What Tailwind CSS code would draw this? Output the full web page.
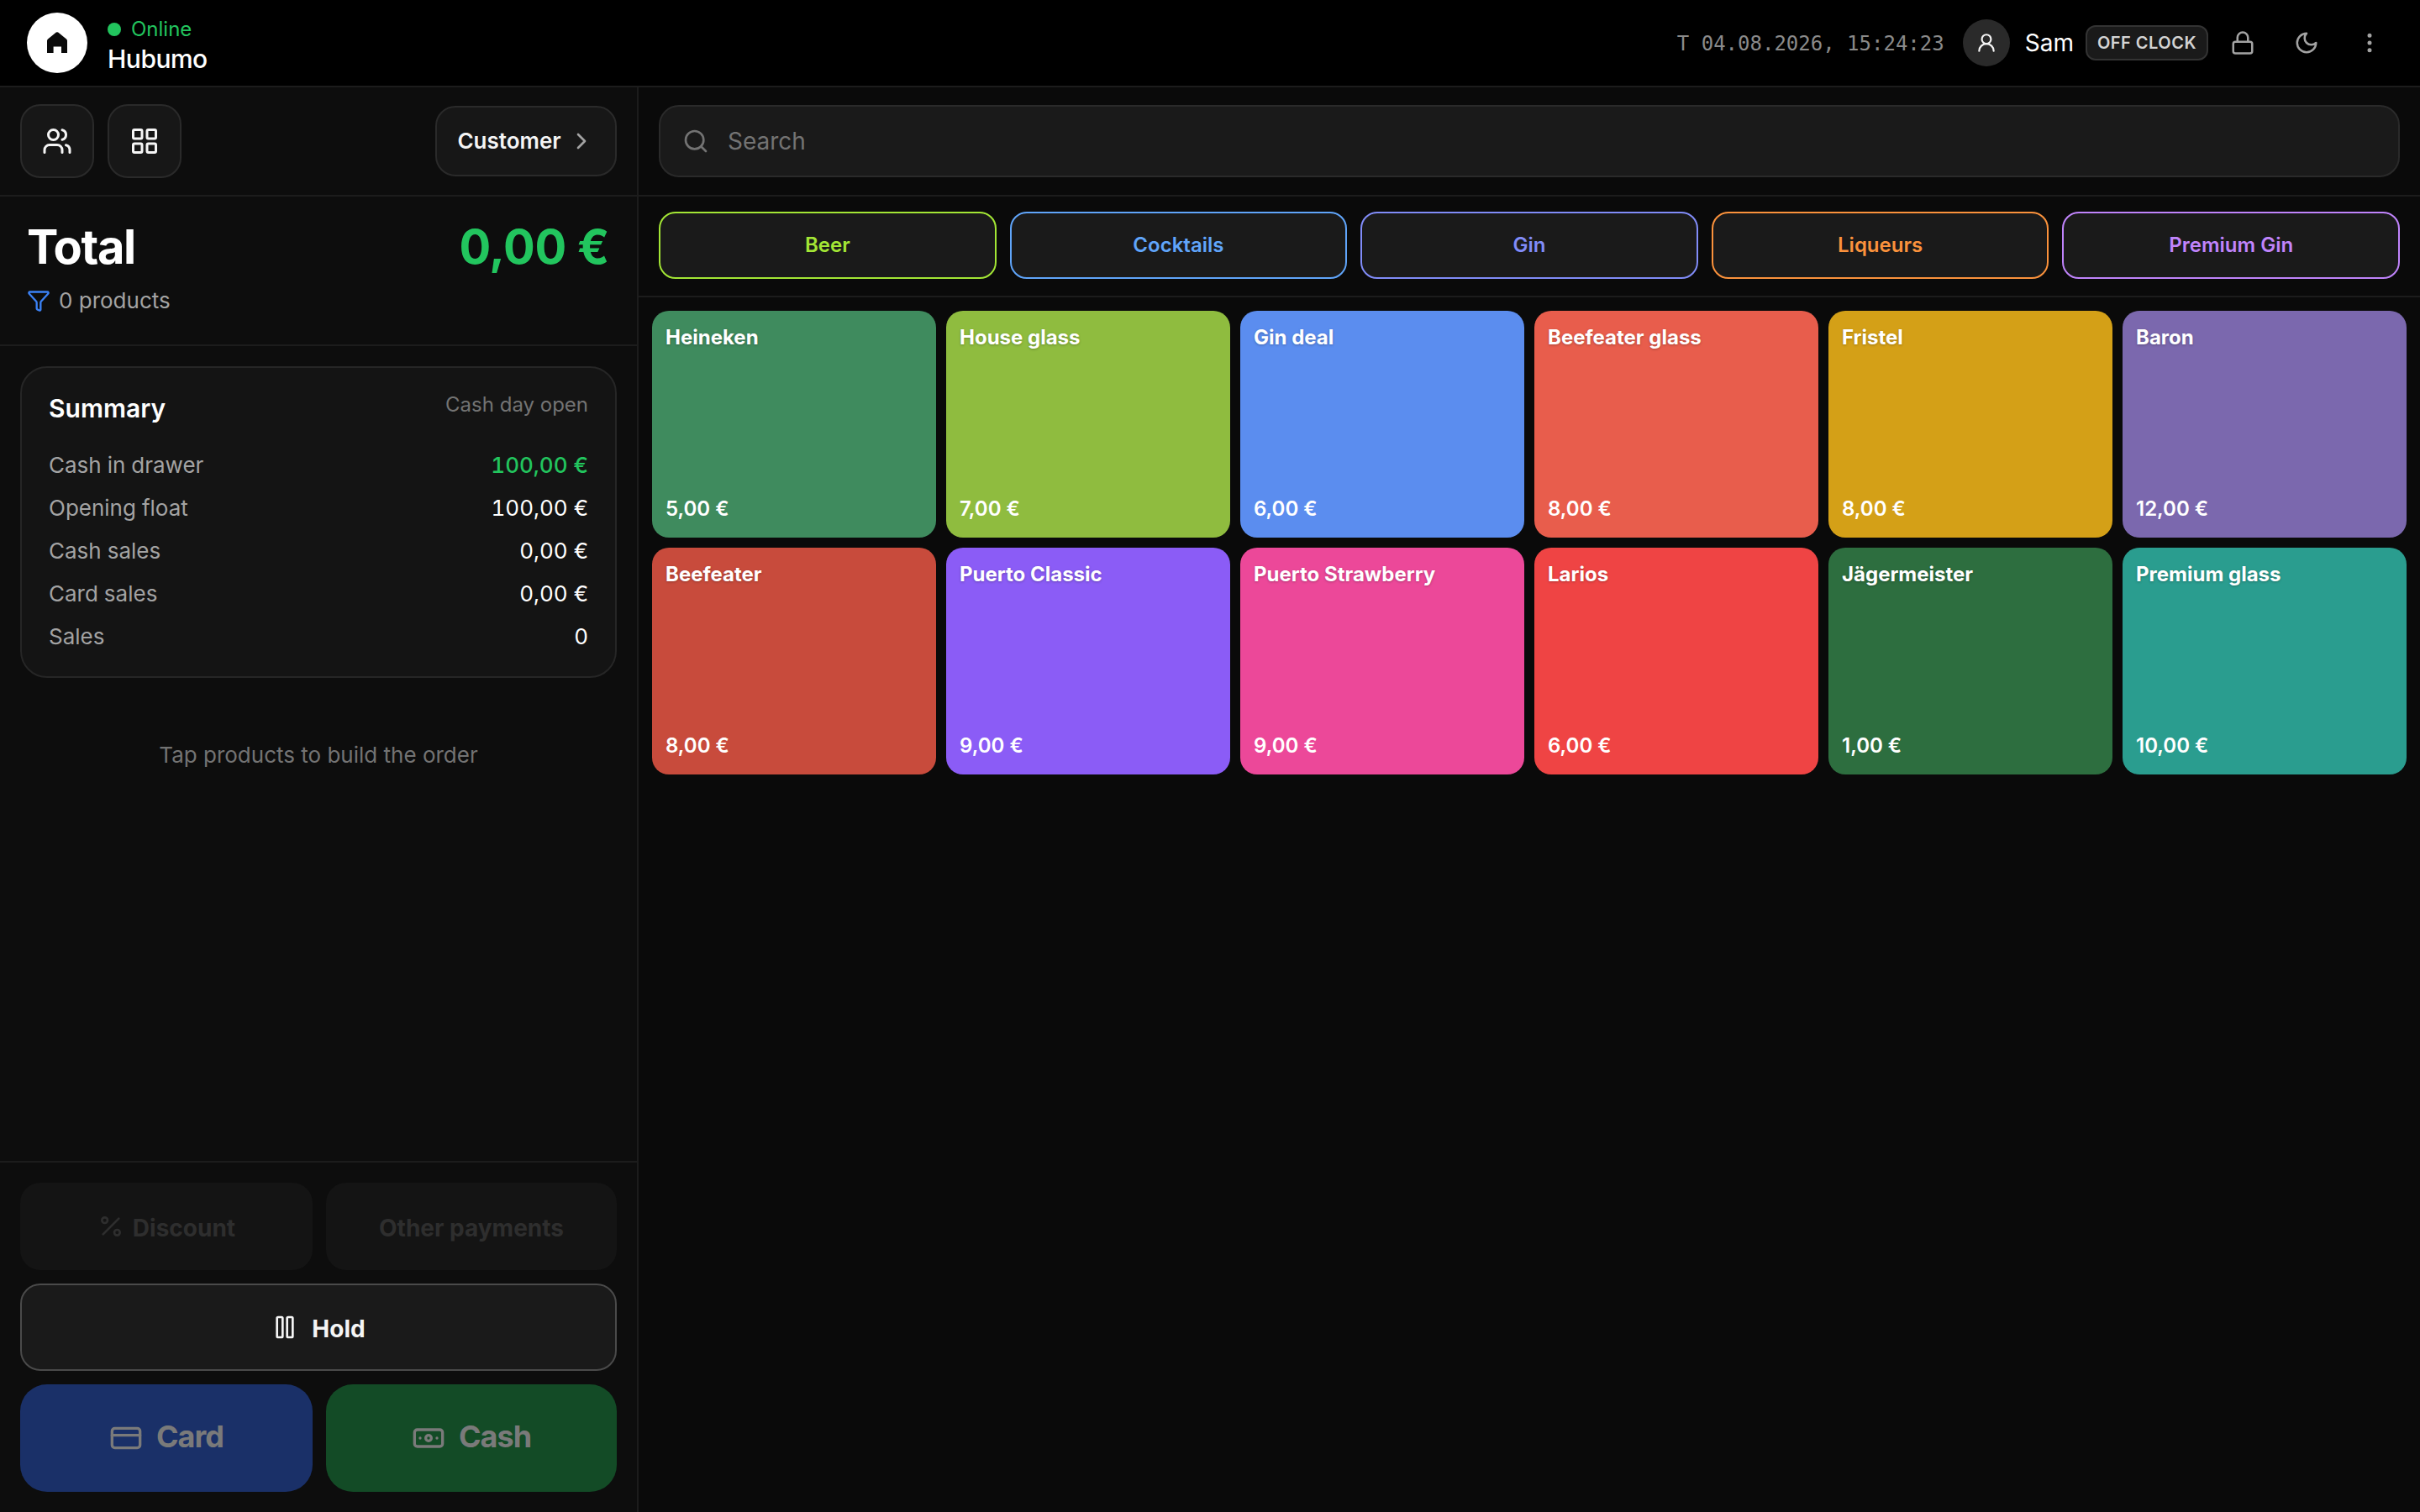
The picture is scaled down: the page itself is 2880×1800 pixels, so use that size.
<!DOCTYPE html>
<html lang="en">
<head>
    <meta charset="UTF-8">
    <meta name="viewport" content="width=device-width, initial-scale=1.0">
    <title>Hubumo POS</title>
    <script src="https://cdn.jsdelivr.net/npm/@tailwindcss/browser@4"></script>
</head>
<body class="bg-[#0a0a0a] text-white font-[family-name:Inter,sans-serif] w-[2880px] h-[1800px] overflow-hidden flex flex-col">

    <!-- Top bar -->
    <header class="h-[104px] shrink-0 bg-black border-b-2 border-[#1c1c1c] flex items-center pl-[32px] pr-[44px]">
        <div class="w-[72px] h-[72px] rounded-full bg-white flex items-center justify-center">
            <svg class="w-[24px] h-[26px]" viewBox="0 0 24 26" fill="#0a0a0a"><path d="M10.8.6a2 2 0 0 1 2.4 0L23 8.5a2.5 2.5 0 0 1 1 2V25h-7v-7.5H7.6V25H0V10.5a2.5 2.5 0 0 1 1-2z"/></svg>
        </div>
        <div class="ml-[24px] mt-[6px] flex flex-col">
            <div class="flex items-center gap-[12px] text-[24px] leading-[32px] text-[#22c55e]">
                <span class="w-[16px] h-[16px] rounded-full bg-[#22c55e]"></span>
                <span>Online</span>
            </div>
            <div class="text-[30px] leading-[38px] font-medium tracking-[-0.5px]">Hubumo</div>
        </div>
        <div class="ml-auto flex items-center">
            <span class="mt-[2px] font-[family-name:'DejaVu_Sans_Mono',monospace] text-[24px] text-[#8a8a8a]">T 04.08.2026, 15:24:23</span>
            <div class="ml-[22px] w-[56px] h-[56px] rounded-full bg-[#2a2a2a] flex items-center justify-center">
                <svg class="w-[26px] h-[26px]" viewBox="0 0 24 24" fill="none" stroke="#f5f5f5" stroke-width="2" stroke-linecap="round" stroke-linejoin="round"><circle cx="12" cy="8" r="5"/><path d="M20 21a8 8 0 0 0-16 0"/></svg>
            </div>
            <span class="ml-[18px] text-[28px]">Sam</span>
            <span class="ml-[14px] h-[42px] px-[12px] rounded-[12px] bg-[#1a1a1a] border-2 border-[#333333] flex items-center text-[20px] font-semibold tracking-[0.5px] text-[#d4d4d4]">OFF CLOCK</span>
            <svg class="ml-[26px] w-[30px] h-[30px]" viewBox="0 0 24 24" fill="none" stroke="#a3a3a3" stroke-width="2" stroke-linecap="round" stroke-linejoin="round"><rect x="3" y="11" width="18" height="11" rx="2"/><path d="M7 11V7a5 5 0 0 1 10 0v4"/></svg>
            <svg class="ml-[46px] w-[30px] h-[30px]" viewBox="0 0 24 24" fill="none" stroke="#a3a3a3" stroke-width="2" stroke-linecap="round" stroke-linejoin="round"><path d="M12 3a6 6 0 0 0 9 9 9 9 0 1 1-9-9Z"/></svg>
            <svg class="ml-[45px] mr-[1px] w-[30px] h-[30px]" viewBox="0 0 24 24" fill="none" stroke="#a3a3a3" stroke-width="2" stroke-linecap="round" stroke-linejoin="round"><circle cx="12" cy="12" r="1"/><circle cx="12" cy="5" r="1"/><circle cx="12" cy="19" r="1"/></svg>
        </div>
    </header>

    <div class="flex-1 flex min-h-0">
        <!-- Order panel -->
        <aside class="w-[760px] shrink-0 border-r-2 border-[#1c1c1c] bg-[#0d0d0d] flex flex-col">
            <div class="h-[130px] shrink-0 border-b-2 border-[#1c1c1c] px-[24px] flex items-center">
                <button class="w-[88px] h-[88px] rounded-[24px] bg-[#171717] border-2 border-[#2a2a2a] flex items-center justify-center">
                    <svg class="w-[36px] h-[36px]" viewBox="0 0 24 24" fill="none" stroke="#f5f5f5" stroke-width="2" stroke-linecap="round" stroke-linejoin="round"><path d="M16 21v-2a4 4 0 0 0-4-4H6a4 4 0 0 0-4 4v2"/><circle cx="9" cy="7" r="4"/><path d="M22 21v-2a4 4 0 0 0-3-3.87"/><path d="M16 3.13a4 4 0 0 1 0 7.75"/></svg>
                </button>
                <button class="ml-[16px] w-[88px] h-[88px] rounded-[24px] bg-[#171717] border-2 border-[#2a2a2a] flex items-center justify-center">
                    <svg class="w-[36px] h-[36px]" viewBox="0 0 24 24" fill="none" stroke="#f5f5f5" stroke-width="2" stroke-linecap="round" stroke-linejoin="round"><rect x="3" y="3" width="7" height="7" rx="1"/><rect x="14" y="3" width="7" height="7" rx="1"/><rect x="14" y="14" width="7" height="7" rx="1"/><rect x="3" y="14" width="7" height="7" rx="1"/></svg>
                </button>
                <button class="ml-auto w-[216px] h-[84px] rounded-[24px] bg-[#171717] border-2 border-[#2a2a2a] flex items-center justify-center gap-[8px] text-[26px] font-semibold text-[#f5f5f5]">
                    <span class="-mt-[2px]">Customer</span>
                    <svg class="w-[32px] h-[32px]" viewBox="0 0 24 24" fill="none" stroke="#a3a3a3" stroke-width="2" stroke-linecap="round" stroke-linejoin="round"><path d="m9 18 6-6-6-6"/></svg>
                </button>
            </div>

            <div class="h-[178px] shrink-0 border-b-2 border-[#1c1c1c] pl-[32px] pr-[33px] pt-[24px]">
                <div class="flex justify-between items-center text-[56px] leading-[72px] font-bold">
                    <span class="tracking-tight">Total</span>
                    <span class="text-[#22c55e] tracking-[-0.3px]">0,00 €</span>
                </div>
                <div class="mt-[8px] flex items-center gap-[10px] text-[26px] text-[#a3a3a3]">
                    <svg class="w-[28px] h-[28px]" viewBox="0 0 24 24" fill="none" stroke="#3b82f6" stroke-width="2" stroke-linecap="round" stroke-linejoin="round"><path d="M10 20a1 1 0 0 0 .553.895l2 1A1 1 0 0 0 14 21v-7a2 2 0 0 1 .517-1.341L21.74 4.67A1 1 0 0 0 21 3H3a1 1 0 0 0-.742 1.67l7.225 7.989A2 2 0 0 1 10 14z"/></svg>
                    <span>0 products</span>
                </div>
            </div>

            <div class="flex-1 px-[24px] pt-[24px]">
                <section class="rounded-[32px] bg-[#141414] border-2 border-[#262626] h-[371px] px-[32px] pt-[22px]">
                    <div class="flex justify-between items-start">
                        <span class="text-[30px] leading-[52px] font-semibold">Summary</span>
                        <span class="text-[24px] leading-[44px] text-[#737373]">Cash day open</span>
                    </div>
                    <div class="mt-[22px] flex flex-col gap-[11px] text-[26px] leading-[40px] tabular-nums">
                        <div class="flex justify-between"><span class="text-[#a3a3a3]">Cash in drawer</span><span class="text-[#22c55e] font-medium">100,00 €</span></div>
                        <div class="flex justify-between"><span class="text-[#a3a3a3]">Opening float</span><span>100,00 €</span></div>
                        <div class="flex justify-between"><span class="text-[#a3a3a3]">Cash sales</span><span>0,00 €</span></div>
                        <div class="flex justify-between"><span class="text-[#a3a3a3]">Card sales</span><span>0,00 €</span></div>
                        <div class="flex justify-between"><span class="text-[#a3a3a3]">Sales</span><span>0</span></div>
                    </div>
                </section>
                <p class="mt-[72px] text-center text-[26px] leading-[40px] text-[#737373]">Tap products to build the order</p>
            </div>

            <div class="shrink-0 border-t-2 border-[#1c1c1c] px-[24px] pt-[24px] pb-[24px] flex flex-col gap-[16px]">
                <div class="grid grid-cols-[348px_346px] gap-[16px]">
                    <button class="h-[104px] rounded-[24px] bg-[#141414] flex items-center justify-center gap-[10px] text-[28px] font-bold text-[#2e2e2e]">
                        <svg class="w-[32px] h-[32px]" viewBox="0 0 24 24" fill="none" stroke="#2e2e2e" stroke-width="2" stroke-linecap="round" stroke-linejoin="round"><line x1="19" y1="5" x2="5" y2="19"/><circle cx="6.5" cy="6.5" r="2.5"/><circle cx="17.5" cy="17.5" r="2.5"/></svg>
                        <span class="mt-[3px]">Discount</span>
                    </button>
                    <button class="h-[104px] rounded-[24px] bg-[#141414] flex items-center justify-center text-[28px] font-bold text-[#2e2e2e]"><span class="mt-[3px]">Other payments</span></button>
                </div>
                <button class="h-[104px] rounded-[24px] bg-[#1a1a1a] border-2 border-[#4a4a4a] flex items-center justify-center gap-[16px] text-[28px] font-bold text-[#f5f5f5]">
                    <svg class="w-[32px] h-[32px]" viewBox="0 0 24 24" fill="none" stroke="#f5f5f5" stroke-width="2" stroke-linecap="round" stroke-linejoin="round"><rect x="14" y="3" width="5" height="18" rx="1"/><rect x="5" y="3" width="5" height="18" rx="1"/></svg>
                    <span class="mt-[3px]">Hold</span>
                </button>
                <div class="grid grid-cols-[348px_346px] gap-[16px]">
                    <button class="h-[128px] rounded-[32px] bg-[#1a3068] flex items-center justify-center gap-[16px] text-[36px] font-bold tracking-[-1px] text-[#7a7a7a]">
                        <svg class="w-[40px] h-[40px]" viewBox="0 0 24 24" fill="none" stroke="#7a7a7a" stroke-width="2" stroke-linecap="round" stroke-linejoin="round"><rect x="2" y="5" width="20" height="14" rx="2"/><line x1="2" y1="10" x2="22" y2="10"/></svg>
                        <span class="-mt-[4px]">Card</span>
                    </button>
                    <button class="h-[128px] rounded-[32px] bg-[#134b26] flex items-center justify-center gap-[16px] text-[36px] font-bold tracking-[-1px] text-[#7a7a7a]">
                        <svg class="w-[40px] h-[40px]" viewBox="0 0 24 24" fill="none" stroke="#7a7a7a" stroke-width="2" stroke-linecap="round" stroke-linejoin="round"><rect x="2" y="6" width="20" height="12" rx="2"/><circle cx="12" cy="12" r="2"/><path d="M6 12h.01M18 12h.01"/></svg>
                        <span class="-mt-[4px]">Cash</span>
                    </button>
                </div>
            </div>
        </aside>

        <!-- Products -->
        <main class="flex-1 min-w-0 flex flex-col">
            <div class="h-[130px] shrink-0 border-b-2 border-[#1c1c1c] px-[24px] flex items-center">
                <div class="w-full h-[86px] rounded-[24px] bg-[#1a1a1a] border-2 border-[#2a2a2a] flex items-center px-[26px] gap-[22px]">
                    <svg class="w-[32px] h-[32px]" viewBox="0 0 24 24" fill="none" stroke="#737373" stroke-width="2" stroke-linecap="round" stroke-linejoin="round"><path d="m21 21-4.34-4.34"/><circle cx="11" cy="11" r="8"/></svg>
                    <span class="text-[28px] text-[#737373]">Search</span>
                </div>
            </div>
            <div class="h-[120px] shrink-0 border-b-2 border-[#1c1c1c] px-[24px] pt-[18px] grid grid-cols-5 gap-[16px] items-start">
                <button class="h-[80px] rounded-[20px] bg-[#1a1a1a] border-2 border-[#a3e635] text-[24px] font-semibold text-[#a3e635]">Beer</button>
                <button class="h-[80px] rounded-[20px] bg-[#1a1a1a] border-2 border-[#60a5fa] text-[24px] font-semibold text-[#60a5fa]">Cocktails</button>
                <button class="h-[80px] rounded-[20px] bg-[#1a1a1a] border-2 border-[#818cf8] text-[24px] font-semibold text-[#818cf8]">Gin</button>
                <button class="h-[80px] rounded-[20px] bg-[#1a1a1a] border-2 border-[#fb923c] text-[24px] font-semibold text-[#fb923c]">Liqueurs</button>
                <button class="h-[80px] rounded-[20px] bg-[#1a1a1a] border-2 border-[#c084fc] text-[24px] font-semibold text-[#c084fc]">Premium Gin</button>
            </div>
            <div class="p-[16px] grid grid-cols-6 grid-rows-[270px_270px] gap-[12px]">
                <div class="rounded-[20px] px-[16px] pt-[16px] pb-[18px] flex flex-col justify-between bg-[#3f8b5e]"><span class="text-[24px] leading-[32px] font-bold [text-shadow:0_1px_3px_rgba(0,0,0,0.25)]">Heineken</span><span class="text-[24px] leading-[32px] font-semibold">5,00 €</span></div>
                <div class="rounded-[20px] px-[16px] pt-[16px] pb-[18px] flex flex-col justify-between bg-[#8fbc3f]"><span class="text-[24px] leading-[32px] font-bold [text-shadow:0_1px_3px_rgba(0,0,0,0.25)]">House glass</span><span class="text-[24px] leading-[32px] font-semibold">7,00 €</span></div>
                <div class="rounded-[20px] px-[16px] pt-[16px] pb-[18px] flex flex-col justify-between bg-[#5b8def]"><span class="text-[24px] leading-[32px] font-bold [text-shadow:0_1px_3px_rgba(0,0,0,0.25)]">Gin deal</span><span class="text-[24px] leading-[32px] font-semibold">6,00 €</span></div>
                <div class="rounded-[20px] px-[16px] pt-[16px] pb-[18px] flex flex-col justify-between bg-[#e85d4c]"><span class="text-[24px] leading-[32px] font-bold [text-shadow:0_1px_3px_rgba(0,0,0,0.25)]">Beefeater glass</span><span class="text-[24px] leading-[32px] font-semibold">8,00 €</span></div>
                <div class="rounded-[20px] px-[16px] pt-[16px] pb-[18px] flex flex-col justify-between bg-[#d4a017]"><span class="text-[24px] leading-[32px] font-bold [text-shadow:0_1px_3px_rgba(0,0,0,0.25)]">Fristel</span><span class="text-[24px] leading-[32px] font-semibold">8,00 €</span></div>
                <div class="rounded-[20px] px-[16px] pt-[16px] pb-[18px] flex flex-col justify-between bg-[#7b68ae]"><span class="text-[24px] leading-[32px] font-bold [text-shadow:0_1px_3px_rgba(0,0,0,0.25)]">Baron</span><span class="text-[24px] leading-[32px] font-semibold">12,00 €</span></div>
                <div class="rounded-[20px] px-[16px] pt-[16px] pb-[18px] flex flex-col justify-between bg-[#c84b3c]"><span class="text-[24px] leading-[32px] font-bold [text-shadow:0_1px_3px_rgba(0,0,0,0.25)]">Beefeater</span><span class="text-[24px] leading-[32px] font-semibold">8,00 €</span></div>
                <div class="rounded-[20px] px-[16px] pt-[16px] pb-[18px] flex flex-col justify-between bg-[#8b5cf6]"><span class="text-[24px] leading-[32px] font-bold [text-shadow:0_1px_3px_rgba(0,0,0,0.25)]">Puerto Classic</span><span class="text-[24px] leading-[32px] font-semibold">9,00 €</span></div>
                <div class="rounded-[20px] px-[16px] pt-[16px] pb-[18px] flex flex-col justify-between bg-[#ec4899]"><span class="text-[24px] leading-[32px] font-bold [text-shadow:0_1px_3px_rgba(0,0,0,0.25)]">Puerto Strawberry</span><span class="text-[24px] leading-[32px] font-semibold">9,00 €</span></div>
                <div class="rounded-[20px] px-[16px] pt-[16px] pb-[18px] flex flex-col justify-between bg-[#ef4444]"><span class="text-[24px] leading-[32px] font-bold [text-shadow:0_1px_3px_rgba(0,0,0,0.25)]">Larios</span><span class="text-[24px] leading-[32px] font-semibold">6,00 €</span></div>
                <div class="rounded-[20px] px-[16px] pt-[16px] pb-[18px] flex flex-col justify-between bg-[#2d6e3f]"><span class="text-[24px] leading-[32px] font-bold [text-shadow:0_1px_3px_rgba(0,0,0,0.25)]">Jägermeister</span><span class="text-[24px] leading-[32px] font-semibold">1,00 €</span></div>
                <div class="rounded-[20px] px-[16px] pt-[16px] pb-[18px] flex flex-col justify-between bg-[#2a9d8f]"><span class="text-[24px] leading-[32px] font-bold [text-shadow:0_1px_3px_rgba(0,0,0,0.25)]">Premium glass</span><span class="text-[24px] leading-[32px] font-semibold">10,00 €</span></div>
            </div>
        </main>
    </div>
</body>
</html>
